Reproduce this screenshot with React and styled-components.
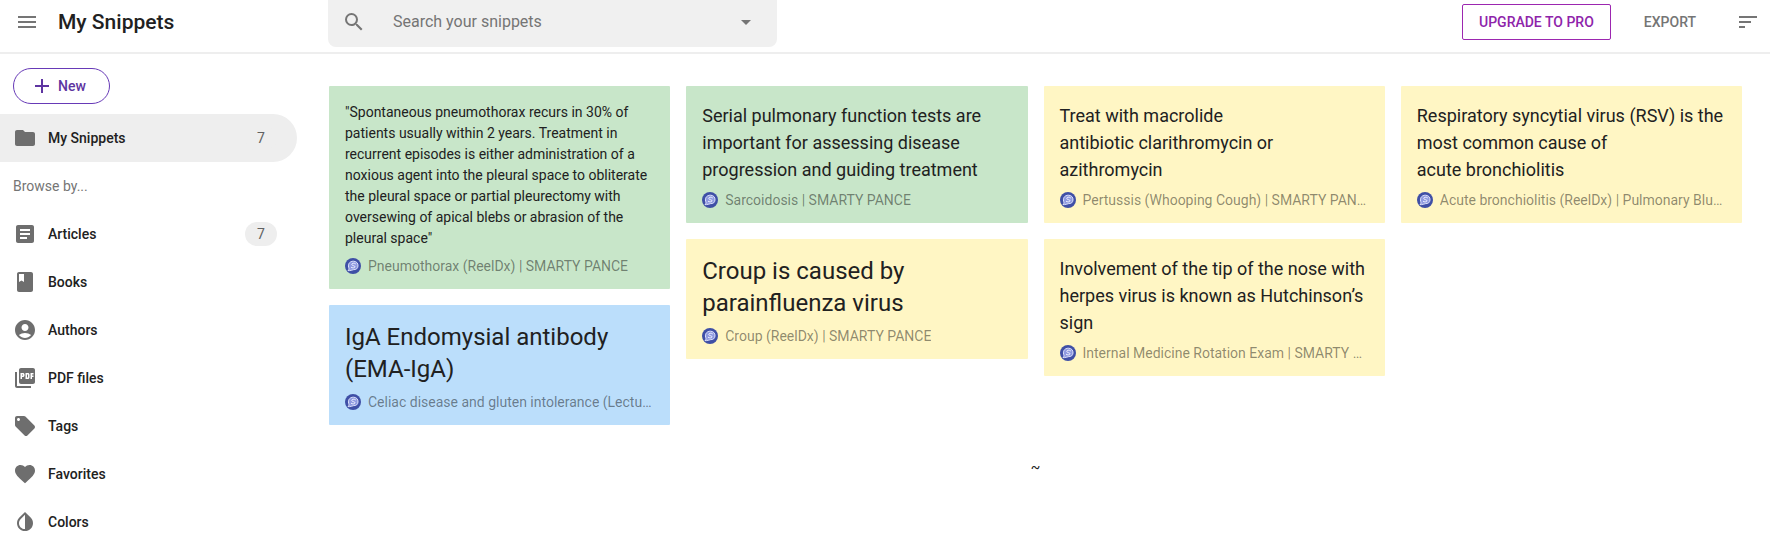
import React from "react";
import styled, { createGlobalStyle } from "styled-components";
import {
  MdMenu, MdSearch, MdArrowDropDown, MdSort, MdAdd, MdFolder, MdArticle, MdBook,
  MdAccountCircle, MdPictureAsPdf, MdLocalOffer, MdFavorite, MdInvertColors,
} from "react-icons/md";

const GlobalStyle = createGlobalStyle`
  *, *::before, *::after { box-sizing: border-box; }
  body {
    margin: 0;
    background: #fff;
    color: #212121;
    font-family: Roboto, "Liberation Sans", sans-serif;
    font-size: 14px;
  }
  button, input { font: inherit; color: inherit; }
  button { border: 0; padding: 0; background: none; cursor: pointer; }
`;

const Header = styled.header`
  display: flex;
  align-items: flex-start;
  height: 54px;
  border-bottom: 2px solid #eeeeee;
`;

const Brand = styled.div`
  display: flex;
  align-items: center;
  flex: 0 0 328px;
  height: 44px;
  padding-left: 15px;
  gap: 19px;
`;

const Title = styled.h1`
  margin: 0;
  font-size: 21px;
  line-height: 24px;
  font-weight: 500;
`;

const IconButton = styled.button`
  display: flex;
  width: 24px;
  height: 24px;
  color: #757575;
`;

const SearchBox = styled.form`
  display: flex;
  align-items: center;
  flex: 0 1 449px;
  height: 47px;
  padding: 0 19px 3px 14px;
  border-radius: 0 0 8px 8px;
  background: #f0f0f0;
`;

const SearchInput = styled.input`
  flex: 1;
  min-width: 0;
  margin-left: 27px;
  padding: 0;
  border: 0;
  outline: 0;
  background: transparent;
  font-size: 16px;
  line-height: 24px;
  &::placeholder { color: #757575; opacity: 1; }
`;

const Actions = styled.div`
  display: flex;
  align-items: center;
  height: 44px;
  margin-left: auto;
  padding-right: 10px;
`;

const ActionButton = styled.button`
  height: 36px;
  padding: 0 16px;
  border-radius: 2px;
  border: 1px solid ${(p) => (p.$outlined ? "#9c27b0" : "transparent")};
  color: ${(p) => (p.$outlined ? "#8e24aa" : "#757575")};
  font-weight: 500;
  white-space: nowrap;
`;

const ActionGroup = styled.div`
  display: flex;
  gap: 16px;
  margin-right: 23px;
`;

const Body = styled.div`
  display: flex;
  align-items: flex-start;
`;

const Sidebar = styled.nav`
  flex: 0 0 297px;
  padding-top: 14px;
`;

const NewButton = styled.button`
  display: flex;
  align-items: center;
  gap: 4px;
  height: 36px;
  margin: 0 0 10px 13px;
  padding: 0 23px 0 16px;
  border: 1px solid #673ab7;
  border-radius: 18px;
  color: #5e35a1;
  font-weight: 500;
`;

const NavItem = styled.a`
  display: flex;
  align-items: center;
  height: 48px;
  padding: 0 20px 0 13px;
  border-radius: 0 24px 24px 0;
  background: ${(p) => (p.$active ? "#eeeeee" : "transparent")};
  color: inherit;
  font-weight: 500;
  text-decoration: none;
  svg { color: #6e6e6e; margin-right: 11px; }
`;

const Count = styled.span`
  margin-left: auto;
  width: 32px;
  border-radius: 12px;
  background: #eeeeee;
  color: #616161;
  font-weight: 400;
  line-height: 24px;
  text-align: center;
`;

const NavHeading = styled.h2`
  margin: 0;
  padding-left: 13px;
  color: #757575;
  font-size: 14px;
  font-weight: 400;
  line-height: 48px;
`;

const Main = styled.main`
  flex: 1;
  min-width: 0;
  padding: 32px 28px 0 32px;
`;

const Board = styled.div`
  display: grid;
  grid-template-columns: repeat(4, minmax(0, 1fr));
  align-items: start;
  gap: 16px;
`;

const Column = styled.div`
  display: flex;
  flex-direction: column;
  gap: 16px;
`;

const TONES = { green: "#c8e6c9", blue: "#bbdefb", yellow: "#fff6c4" };

const Card = styled.article`
  padding: 16px 16px 14px;
  border-radius: 1px;
  background: ${(p) => TONES[p.$tone]};
`;

const SIZES = {
  small: "font-size: 14px; line-height: 21px;",
  medium: "font-size: 18px; line-height: 27px;",
  large: "font-size: 24px; line-height: 32px;",
};

const Quote = styled.p`
  margin: 0 0 8px;
  ${(p) => SIZES[p.$size]}
`;

const Source = styled.a`
  display: flex;
  align-items: center;
  gap: 7px;
  color: rgba(0, 0, 0, 0.46);
  line-height: 18px;
  text-decoration: none;
  svg { flex: none; }
`;

const SourceName = styled.span`
  overflow: hidden;
  text-overflow: ellipsis;
  white-space: nowrap;
`;

const EndMark = styled.p`
  margin: 32px 0 0;
  line-height: 20px;
  text-align: center;
`;

function SiteLogo() {
  return (
    <svg width="16" height="16" viewBox="0 0 16 16" aria-hidden="true">
      <circle cx="8" cy="8" r="8" fill="#3f4fa6" />
      <path
        d="M3 12.6 C4.2 11.8 4.2 10.4 3.6 9.2 C2.8 5.6 5 3.2 8.4 3.2 C11.6 3.2 13.2 5.4 13 8 C12.8 10.6 11 11.8 8.8 11.6 C7.6 11.6 6.4 12.6 4.6 12.6 Z"
        fill="#8f9ae0" stroke="#dde1fb" strokeWidth="1"
      />
      <path
        d="M10.8 6 C9.4 4.8 6.8 5 6.8 6.5 C6.8 8 10.2 7.3 10 8.9 C9.8 10.1 7.4 10.1 6 9.2"
        fill="none" stroke="#eef0ff" strokeWidth="1"
      />
    </svg>
  );
}

const NAV = [
  ["Articles", MdArticle, 7],
  ["Books", MdBook],
  ["Authors", MdAccountCircle],
  ["PDF files", MdPictureAsPdf],
  ["Tags", MdLocalOffer],
  ["Favorites", MdFavorite],
  ["Colors", MdInvertColors],
];

const COLUMNS = [
  [
    {
      tone: "green", size: "small",
      text: "\"Spontaneous pneumothorax recurs in 30% of patients usually within 2 years. Treatment in recurrent episodes is either administration of a noxious agent into the pleural space to obliterate the pleural space or partial pleurectomy with oversewing of apical blebs or abrasion of the pleural space\"",
      source: "Pneumothorax (ReelDx) | SMARTY PANCE",
    },
    {
      tone: "blue", size: "large",
      text: "IgA Endomysial antibody (EMA-IgA)",
      source: "Celiac disease and gluten intolerance (Lecture) | SMARTY PANCE",
    },
  ],
  [
    {
      tone: "green", size: "medium",
      text: "Serial pulmonary function tests are important for assessing disease progression and guiding treatment",
      source: "Sarcoidosis | SMARTY PANCE",
    },
    {
      tone: "yellow", size: "large",
      text: "Croup is caused by parainfluenza virus",
      source: "Croup (ReelDx) | SMARTY PANCE",
    },
  ],
  [
    {
      tone: "yellow", size: "medium",
      text: "Treat with macrolide antibiotic\u00a0clarithromycin or azithromycin",
      source: "Pertussis (Whooping Cough) | SMARTY PANCE",
    },
    {
      tone: "yellow", size: "medium",
      text: "Involvement of the tip of the nose with herpes virus is known as Hutchinson’s sign",
      source: "Internal Medicine Rotation Exam | SMARTY PANCE",
    },
  ],
  [
    {
      tone: "yellow", size: "medium",
      text: "Respiratory syncytial virus (RSV) is the most common cause of acute\u00a0bronchiolitis",
      source: "Acute bronchiolitis (ReelDx) | Pulmonary Blueprint",
    },
  ],
];

export default function App() {
  return (
    <>
      <GlobalStyle />
      <Header>
        <Brand>
          <IconButton aria-label="Menu"><MdMenu size={24} /></IconButton>
          <Title>My Snippets</Title>
        </Brand>
        <SearchBox role="search" onSubmit={(e) => e.preventDefault()}>
          <IconButton aria-label="Search"><MdSearch size={24} /></IconButton>
          <SearchInput type="search" aria-label="Search your snippets" placeholder="Search your snippets" />
          <IconButton type="button" aria-label="Search options"><MdArrowDropDown size={24} /></IconButton>
        </SearchBox>
        <Actions>
          <ActionGroup>
            <ActionButton $outlined>UPGRADE TO PRO</ActionButton>
            <ActionButton>EXPORT</ActionButton>
          </ActionGroup>
          <IconButton aria-label="Sort"><MdSort size={24} /></IconButton>
        </Actions>
      </Header>
      <Body>
        <Sidebar>
          <NewButton><MdAdd size={24} />New</NewButton>
          <NavItem href="#snippets" $active><MdFolder size={24} />My Snippets<Count>7</Count></NavItem>
          <NavHeading>Browse by...</NavHeading>
          {NAV.map(([label, Icon, count]) => (
            <NavItem key={label} href={`#${label}`}>
              <Icon size={24} />
              {label}
              {count && <Count>{count}</Count>}
            </NavItem>
          ))}
        </Sidebar>
        <Main>
          <Board>
            {COLUMNS.map((cards, i) => (
              <Column key={i}>
                {cards.map((card) => (
                  <Card key={card.source} $tone={card.tone}>
                    <Quote $size={card.size}>{card.text}</Quote>
                    <Source href="#source">
                      <SiteLogo />
                      <SourceName>{card.source}</SourceName>
                    </Source>
                  </Card>
                ))}
              </Column>
            ))}
          </Board>
          <EndMark>~</EndMark>
        </Main>
      </Body>
    </>
  );
}
